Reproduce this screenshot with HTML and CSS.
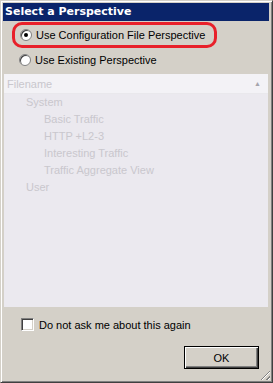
FILE: index.html
```
<!DOCTYPE html>
<html lang="en">

<head>
    <meta charset="UTF-8">
    <meta name="viewport" content="width=device-width, initial-scale=1.0">
    <title>Select a Perspective</title>
    <link rel="stylesheet" href="styles.css">
</head>

<body>
    <div class="window">
        <div class="titlebar">Select a Perspective</div>
        <div class="content">
            <div class="options">
                <label class="option highlight">
                    <span class="radio checked"></span>
                    <span>Use Configuration File Perspective</span>
                </label>
                <label class="option">
                    <span class="radio"></span>
                    <span>Use Existing Perspective</span>
                </label>
            </div>
            <div class="list">
                <div class="list-header">
                    <span>Filename</span>
                    <span class="sort">&#9650;</span>
                </div>
                <div class="row level1">System</div>
                <div class="row level2">Basic Traffic</div>
                <div class="row level2">HTTP +L2-3</div>
                <div class="row level2">Interesting Traffic</div>
                <div class="row level2">Traffic Aggregate View</div>
                <div class="row level1">User</div>
            </div>
            <label class="check-option">
                <span class="checkbox"></span>
                <span>Do not ask me about this again</span>
            </label>
            <div class="buttons">
                <button class="btn">OK</button>
            </div>
        </div>
        <div class="grip"></div>
    </div>
</body>

</html>
```

FILE: styles.css
```
body {
    margin: 0;
    overflow: hidden;
    font-family: 'Liberation Sans', Arial, sans-serif;
    font-size: 11px;
    background-color: #d4d0c8;
}

.window {
    width: 273px;
    height: 383px;
    box-sizing: border-box;
    position: relative;
    display: flex;
    flex-direction: column;
    background: #d4d0c8;
    border-top: 1px solid #d4d0c8;
    border-left: 1px solid #d4d0c8;
    border-right: 1px solid #404040;
    border-bottom: 1px solid #404040;
    box-shadow: inset 1px 1px 0 #ffffff, inset -1px -1px 0 #808080;
    padding: 2px 3px 3px 2px;
}

.titlebar {
    height: 18px;
    line-height: 18px;
    background: #0a246a;
    color: #ffffff;
    font-family: 'DejaVu Sans', sans-serif;
    font-weight: bold;
    font-size: 11px;
    padding-left: 2px;
}

.content {
    flex: 1;
    display: flex;
    flex-direction: column;
}

.options {
    padding: 1px 0 0 9px;
}

.option {
    display: flex;
    align-items: center;
    height: 20px;
    padding-left: 7px;
    gap: 4px;
    color: #000000;
}

.option.highlight {
    height: 20px;
    width: 194px;
    border: 3px solid #e8202a;
    border-radius: 10px;
    padding-left: 5px;
    margin-bottom: 2px;
}

.radio {
    width: 12px;
    height: 12px;
    box-sizing: border-box;
    border-radius: 50%;
    background: #ffffff;
    border: 1px solid #808080;
    box-shadow: inset 1px 1px 0 #404040;
    display: flex;
    align-items: center;
    justify-content: center;
}

.radio.checked::after {
    content: '';
    width: 4px;
    height: 4px;
    border-radius: 50%;
    background: #000000;
}

.list {
    margin: 4px 1px 0 1px;
    height: 233px;
    background-color: #ebe9ef;
    background-image: radial-gradient(#e5e3e9 0.6px, transparent 0.7px);
    background-size: 2px 2px;
    color: #c9c7cd;
}

.list-header {
    height: 19px;
    display: flex;
    align-items: center;
    justify-content: space-between;
    background: #f3f2f6;
    padding: 0 7px 0 3px;
    border-bottom: 1px solid #e9e8ec;
}

.sort {
    font-size: 7px;
    color: #a6a4ac;
}

.row {
    height: 17px;
    line-height: 17px;
}

.row.level1 {
    padding-left: 22px;
}

.row.level2 {
    padding-left: 40px;
}

.check-option {
    display: flex;
    align-items: center;
    gap: 5px;
    margin: 11px 0 0 18px;
    color: #000000;
}

.checkbox {
    width: 13px;
    height: 13px;
    box-sizing: border-box;
    background: #ffffff;
    border-top: 1px solid #808080;
    border-left: 1px solid #808080;
    border-right: 1px solid #ffffff;
    border-bottom: 1px solid #ffffff;
    box-shadow: inset 1px 1px 0 #404040, inset -1px -1px 0 #d4d0c8;
}

.buttons {
    display: flex;
    justify-content: flex-end;
    margin-top: 15px;
    padding-right: 10px;
}

.btn {
    width: 75px;
    height: 23px;
    background: #d4d0c8;
    border: 1px solid #000000;
    box-shadow: inset 1px 1px 0 #ffffff, inset -1px -1px 0 #404040, inset -2px -2px 0 #808080;
    font-family: 'Liberation Sans', Arial, sans-serif;
    font-size: 11px;
    color: #000000;
    padding: 0;
}

.grip {
    position: absolute;
    right: 2px;
    bottom: 2px;
    width: 12px;
    height: 12px;
    background: repeating-linear-gradient(135deg, transparent 0 2px, #808080 2px 3px, #ffffff 3px 4px);
    clip-path: polygon(100% 0, 100% 100%, 0 100%);
}
```
